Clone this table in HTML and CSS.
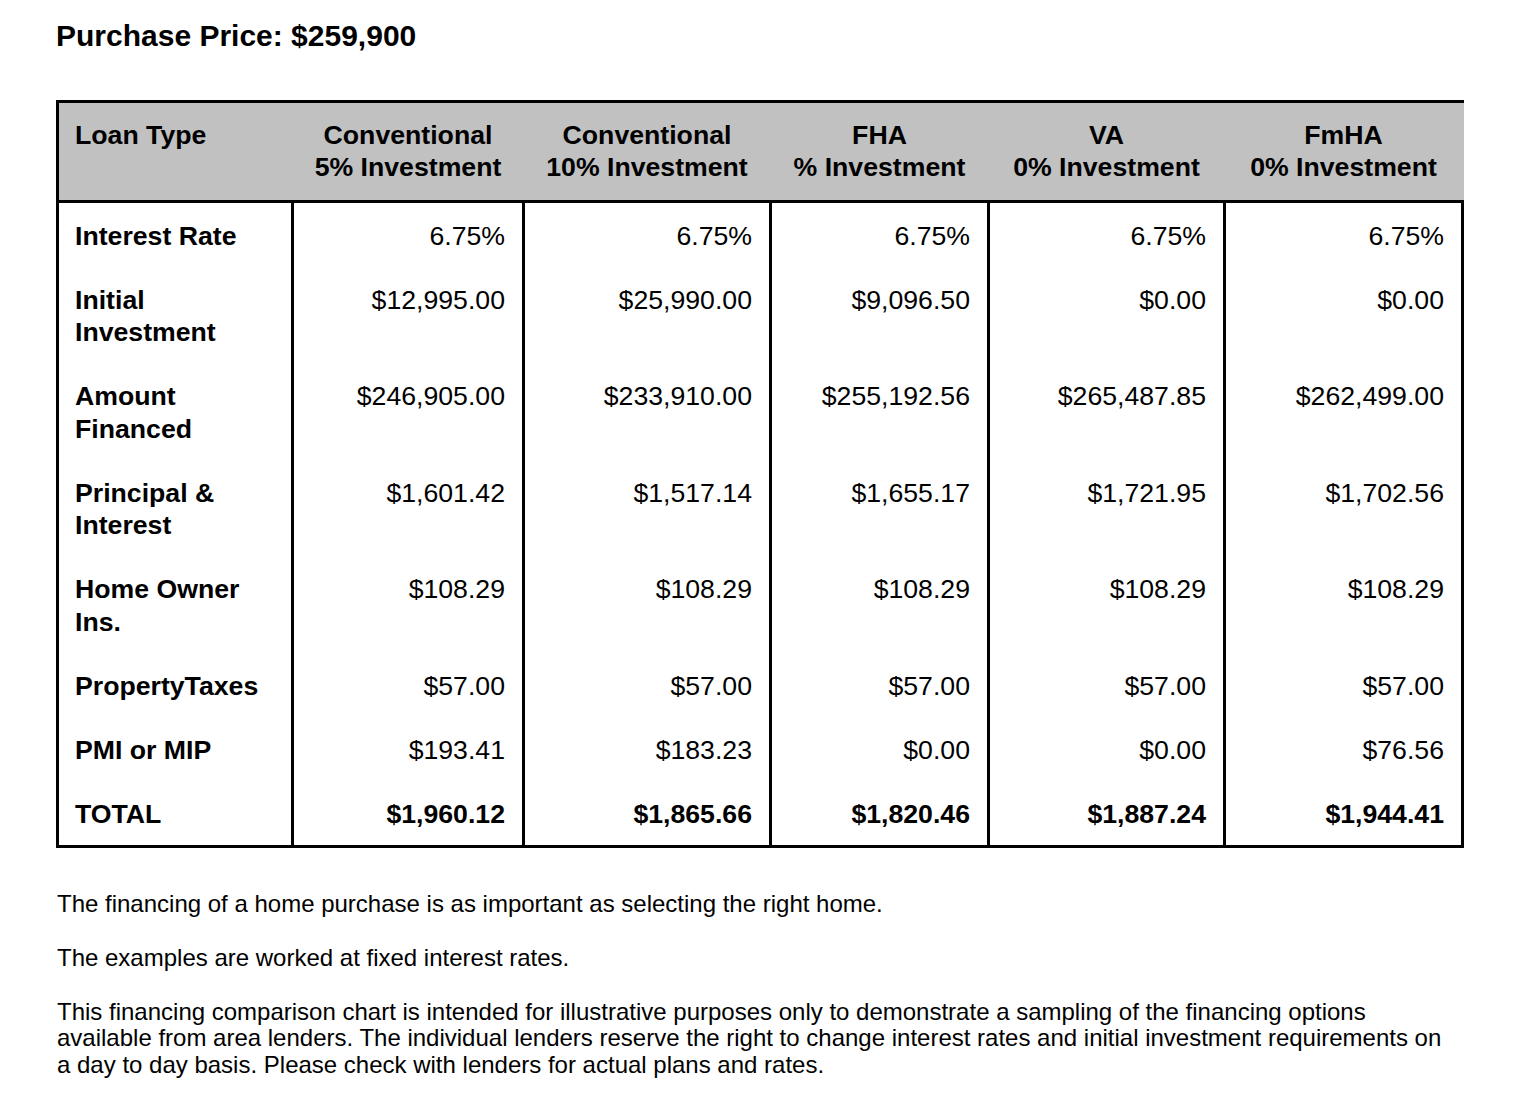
FILE: index.html
```html
<!DOCTYPE html>
<html lang="en">
<head>
<meta charset="utf-8">
<title>Purchase Price</title>
<link rel="stylesheet" href="styles.css">
</head>
<body>
<div class="page">
  <h1 class="title">Purchase Price: $259,900</h1>

  <div class="chart">
    <div class="hcell first">Loan Type</div>
    <div class="hcell">Conventional<br>5% Investment</div>
    <div class="hcell">Conventional<br>10% Investment</div>
    <div class="hcell">FHA<br>% Investment</div>
    <div class="hcell">VA<br>0% Investment</div>
    <div class="hcell last">FmHA<br>0% Investment</div>

    <div class="label">Interest Rate</div>
    <div class="val">6.75%</div>
    <div class="val">6.75%</div>
    <div class="val">6.75%</div>
    <div class="val">6.75%</div>
    <div class="val end">6.75%</div>

    <div class="label">Initial<br>Investment</div>
    <div class="val">$12,995.00</div>
    <div class="val">$25,990.00</div>
    <div class="val">$9,096.50</div>
    <div class="val">$0.00</div>
    <div class="val end">$0.00</div>

    <div class="label">Amount<br>Financed</div>
    <div class="val">$246,905.00</div>
    <div class="val">$233,910.00</div>
    <div class="val">$255,192.56</div>
    <div class="val">$265,487.85</div>
    <div class="val end">$262,499.00</div>

    <div class="label">Principal &amp;<br>Interest</div>
    <div class="val">$1,601.42</div>
    <div class="val">$1,517.14</div>
    <div class="val">$1,655.17</div>
    <div class="val">$1,721.95</div>
    <div class="val end">$1,702.56</div>

    <div class="label">Home Owner<br>Ins.</div>
    <div class="val">$108.29</div>
    <div class="val">$108.29</div>
    <div class="val">$108.29</div>
    <div class="val">$108.29</div>
    <div class="val end">$108.29</div>

    <div class="label">PropertyTaxes</div>
    <div class="val">$57.00</div>
    <div class="val">$57.00</div>
    <div class="val">$57.00</div>
    <div class="val">$57.00</div>
    <div class="val end">$57.00</div>

    <div class="label">PMI or MIP</div>
    <div class="val">$193.41</div>
    <div class="val">$183.23</div>
    <div class="val">$0.00</div>
    <div class="val">$0.00</div>
    <div class="val end">$76.56</div>

    <div class="label bottom">TOTAL</div>
    <div class="val bottom total">$1,960.12</div>
    <div class="val bottom total">$1,865.66</div>
    <div class="val bottom total">$1,820.46</div>
    <div class="val bottom total">$1,887.24</div>
    <div class="val bottom total end">$1,944.41</div>
  </div>

  <div class="notes">
    <p>The financing of a home purchase is as important as selecting the right home.</p>
    <p>The examples are worked at fixed interest rates.</p>
    <p>This financing comparison chart is intended for illustrative purposes only to demonstrate a sampling of the financing options available from area lenders. The individual lenders reserve the right to change interest rates and initial investment requirements on a day to day basis. Please check with lenders for actual plans and rates.</p>
  </div>
</div>
</body>
</html>
```

FILE: styles.css
```css
html, body {
  margin: 0;
  padding: 0;
  background: #ffffff;
}

body {
  font-family: "Liberation Sans", Arial, Helvetica, sans-serif;
  color: #000000;
}

.page {
  padding: 18px 0 0 56px;
}

.title {
  margin: 0;
  font-size: 30px;
  line-height: 36px;
  font-weight: 700;
}

.chart {
  margin-top: 46px;
  width: 1408px;
  display: grid;
  grid-template-columns: 235px 231px 247px 218px 236px 241px;
  font-size: 26.67px;
  line-height: 32.5px;
}

.hcell {
  background: #c0c1c0;
  font-weight: 700;
  text-align: center;
  border-top: 3px solid #000;
  border-bottom: 3px solid #000;
  padding: 15.75px 4px 15.75px 7px;
}

.hcell.first {
  text-align: left;
  border-left: 3px solid #000;
  padding-left: 16px;
}

.hcell.last {
  padding-right: 7px;
}

.label,
.val {
  border-left: 3px solid #000;
  padding: 17.25px 17px 14.25px 16px;
}

.label {
  font-weight: 700;
  text-align: left;
}

.val {
  text-align: right;
}

.val.end {
  border-right: 3px solid #000;
}

.bottom {
  border-bottom: 3px solid #000;
}

.total {
  font-weight: 700;
}

.notes {
  margin-top: 43px;
  padding-left: 1px;
  width: 1395px;
  font-size: 24px;
  line-height: 26.5px;
}

.notes p {
  margin: 0 0 27.5px 0;
}
```
